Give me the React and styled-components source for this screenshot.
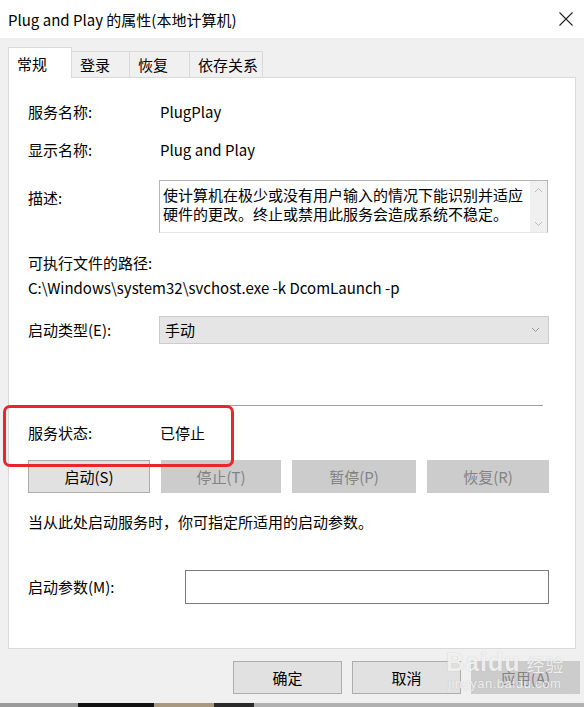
import React from "react"
import styled, { createGlobalStyle } from "styled-components"

const GlobalStyle = createGlobalStyle`
  html, body {
    margin: 0;
    padding: 0;
    background: #f0f0f0;
  }
  body {
    font-family: "Noto Sans CJK SC", "Noto Sans", sans-serif;
    font-size: 15px;
    color: #000;
  }
`

const Window = styled.div`
  position: relative;
  width: 584px;
  height: 707px;
  background: #f0f0f0;
  display: flex;
  flex-direction: column;
  overflow: hidden;
`

const TitleBar = styled.div`
  height: 38px;
  background: #fff;
  display: flex;
  align-items: center;
  justify-content: space-between;
  padding: 0 10px 0 8px;
  box-sizing: border-box;
  font-size: 15px;
  flex-shrink: 0;
`

const CloseIcon = styled.svg`
  width: 14px;
  height: 14px;
  margin-right: 1px;
`

const Body = styled.div`
  flex: 1;
  display: flex;
  flex-direction: column;
  padding: 10px 8px 0 8px;
`

const Tabs = styled.div`
  display: flex;
  align-items: flex-end;
  height: 30px;
  position: relative;
  z-index: 1;
`

const Tab = styled.div`
  width: ${p => p.w}px;
  height: ${p => (p.active ? 31 : 27)}px;
  box-sizing: border-box;
  padding-left: 8px;
  display: flex;
  align-items: center;
  background: ${p => (p.active ? "#fff" : "#f0f0f0")};
  border: 1px solid #d9d9d9;
  border-bottom: ${p => (p.active ? "none" : "1px solid #d9d9d9")};
  margin-left: ${p => (p.first ? 0 : -1)}px;
  font-size: 15px;
`

const Panel = styled.div`
  height: 572px;
  box-sizing: border-box;
  background: #fff;
  border: 1px solid #d9d9d9;
  margin-top: -1px;
  padding: 24px 26px 0 19px;
  display: flex;
  flex-direction: column;
`

const Row = styled.div`
  display: flex;
  align-items: ${p => p.align || "center"};
  margin-top: ${p => p.gap || 0}px;
  line-height: 20px;
`

const Label = styled.div`
  width: ${p => p.w || 132}px;
  flex-shrink: 0;
  padding-top: ${p => p.pt || 0}px;
`

const TextBox = styled.div`
  width: 389px;
  height: 53px;
  margin-left: -1px;
  box-sizing: border-box;
  border: 1px solid #b5b5b5;
  border-bottom-color: #e6e6e6;
  display: flex;
`

const TextContent = styled.div`
  flex: 1;
  padding: 4px 0 0 3px;
  line-height: 19px;
  white-space: pre-line;
`

const ScrollBar = styled.div`
  width: 17px;
  background: #f0f0f0;
  display: flex;
  flex-direction: column;
  justify-content: space-between;
  align-items: center;
  padding: 6px 0 5px;
`

const Chevron = styled.svg`
  width: 9px;
  height: 6px;
`

const Text = styled.div`
  margin-top: ${p => p.gap || 0}px;
  line-height: 20px;
  white-space: nowrap;
`

const Select = styled.div`
  width: 390px;
  height: 28px;
  margin-left: -1px;
  box-sizing: border-box;
  background: #e5e5e5;
  border: 1px solid #cccccc;
  display: flex;
  align-items: center;
  justify-content: space-between;
  padding: 0 8px 0 5px;
`

const Separator = styled.div`
  height: 1px;
  background: #a0a0a0;
  margin: 61px 6px 0 0;
`

const ButtonRow = styled.div`
  display: flex;
  gap: ${p => p.gap || 11}px;
  margin-top: ${p => p.top || 0}px;
`

const Button = styled.div`
  width: ${p => p.w || 121}px;
  height: 33px;
  box-sizing: border-box;
  display: flex;
  align-items: center;
  justify-content: center;
  background: ${p => (p.disabled ? "#cccccc" : "#e1e1e1")};
  border: 1px solid ${p => (p.disabled ? "#cccccc" : "#adadad")};
  color: ${p => (p.disabled ? "#838383" : "#000")};
  font-size: 15px;
`

const Input = styled.div`
  width: 365px;
  height: 34px;
  box-sizing: border-box;
  border: 1px solid #7a7a7a;
  background: #fff;
`

const Footer = styled.div`
  display: flex;
  justify-content: flex-end;
  gap: 10px;
  margin: 12px -4px 0 0;
`

const DesktopStrip = styled.div`
  margin-top: auto;
  height: 4px;
  display: flex;
  background: #b8b8b8;
`

const StripPart = styled.div`
  width: ${p => p.w}px;
  background: ${p => p.c};
`

const Highlight = styled.div`
  position: absolute;
  left: 3px;
  top: 405px;
  width: 231px;
  height: 62px;
  box-sizing: border-box;
  border: 3px solid #e8262b;
  border-radius: 7px;
  pointer-events: none;
`

const Watermark = styled.div`
  position: absolute;
  left: 446px;
  top: 648px;
  display: flex;
  flex-direction: column;
  align-items: flex-start;
  color: rgba(255, 255, 255, 0.8);
  text-shadow: 0 0 1px rgba(140, 140, 140, 0.5);
  font-family: "Liberation Sans", Arial, sans-serif;
  pointer-events: none;
`

const MarkTop = styled.div`
  display: flex;
  align-items: flex-end;
  font-size: 25px;
  font-weight: bold;
  line-height: 28px;
  letter-spacing: 1px;
`

const MarkCn = styled.span`
  font-family: "Noto Sans CJK SC", sans-serif;
  font-size: 18px;
  font-weight: normal;
  margin-left: 6px;
  line-height: 24px;
`

const MarkUrl = styled.div`
  font-size: 13px;
  line-height: 16px;
  letter-spacing: 0.5px;
  margin-left: 2px;
`

const ChevronUp = () => (
  <Chevron viewBox="0 0 9 6">
    <path d="M1 5 L4.5 1.5 L8 5" fill="none" stroke="#bcbcbc" strokeWidth="1" />
  </Chevron>
)

const ChevronDown = ({ color = "#bcbcbc" }) => (
  <Chevron viewBox="0 0 9 6">
    <path d="M1 1 L4.5 4.5 L8 1" fill="none" stroke={color} strokeWidth="1" />
  </Chevron>
)

const App = () => {
  return (
    <Window>
      <GlobalStyle />
      <TitleBar>
        <span>Plug and Play 的属性(本地计算机)</span>
        <CloseIcon viewBox="0 0 14 14">
          <path d="M0.5 0.5 L13.5 13.5 M13.5 0.5 L0.5 13.5" stroke="#222" strokeWidth="1.1" />
        </CloseIcon>
      </TitleBar>
      <Body>
        <Tabs>
          <Tab w={64} active first>常规</Tab>
          <Tab w={59}>登录</Tab>
          <Tab w={61}>恢复</Tab>
          <Tab w={74}>依存关系</Tab>
        </Tabs>
        <Panel>
          <Row>
            <Label>服务名称:</Label>
            <span>PlugPlay</span>
          </Row>
          <Row gap={18}>
            <Label>显示名称:</Label>
            <span>Plug and Play</span>
          </Row>
          <Row gap={20} align="flex-start">
            <Label pt={8}>描述:</Label>
            <TextBox>
              <TextContent>
                {"使计算机在极少或没有用户输入的情况下能识别并适应\n硬件的更改。终止或禁用此服务会造成系统不稳定。"}
              </TextContent>
              <ScrollBar>
                <ChevronUp />
                <ChevronDown />
              </ScrollBar>
            </TextBox>
          </Row>
          <Text gap={20}>可执行文件的路径:</Text>
          <Text gap={5}>C:\Windows\system32\svchost.exe -k DcomLaunch -p</Text>
          <Row gap={18}>
            <Label>启动类型(E):</Label>
            <Select>
              <span>手动</span>
              <ChevronDown color="#999" />
            </Select>
          </Row>
          <Separator />
          <Row gap={17}>
            <Label>服务状态:</Label>
            <span>已停止</span>
          </Row>
          <ButtonRow top={17}>
            <Button w={122}>启动(S)</Button>
            <Button w={120} disabled>停止(T)</Button>
            <Button w={124} disabled>暂停(P)</Button>
            <Button w={122} disabled>恢复(R)</Button>
          </ButtonRow>
          <Text gap={19}>当从此处启动服务时，你可指定所适用的启动参数。</Text>
          <Row gap={38}>
            <Label w={157}>启动参数(M):</Label>
            <Input />
          </Row>
        </Panel>
        <Footer>
          <Button w={109}>确定</Button>
          <Button w={109}>取消</Button>
          <Button w={109} disabled>应用(A)</Button>
        </Footer>
      </Body>
      <DesktopStrip>
        <StripPart w={78} c="#9a9a9a" />
        <StripPart w={76} c="#111" />
        <StripPart w={60} c="#a89880" />
        <StripPart w={40} c="#2a2a2a" />
        <StripPart w={330} c="#b0b0b0" />
      </DesktopStrip>
      <Highlight />
      <Watermark>
        <MarkTop>
          Bai<span>du</span>
          <MarkCn>经验</MarkCn>
        </MarkTop>
        <MarkUrl>jingyan.baidu.com</MarkUrl>
      </Watermark>
    </Window>
  )
}

export default App
